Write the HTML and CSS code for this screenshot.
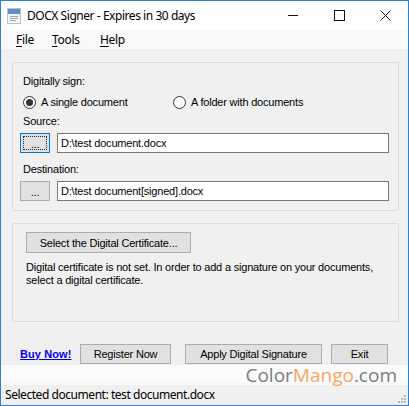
FILE: index.html
```html
<!DOCTYPE html>
<html>
<head>
<meta charset="utf-8">
<link rel="stylesheet" href="styles.css">
</head>
<body>
<div class="window">
  <div class="titlebar">
    <svg class="appicon" width="14" height="16" viewBox="0 0 14 16">
      <rect x="0.5" y="0.5" width="13" height="15" fill="#f4f6f8" stroke="#b9c2cc"/>
      <rect x="1" y="1" width="12" height="5" fill="#5b8fc9"/>
      <rect x="3" y="8" width="8" height="1" fill="#9aa6b2"/>
      <rect x="3" y="10" width="8" height="1" fill="#9aa6b2"/>
      <rect x="3" y="12" width="6" height="1" fill="#9aa6b2"/>
    </svg>
    <span class="title">DOCX Signer - Expires in 30 days</span>
    <div class="caption">
      <span class="cbtn"><svg width="11" height="11" viewBox="0 0 11 11"><path d="M0 5.5H10" stroke="#111" stroke-width="1"/></svg></span>
      <span class="cbtn"><svg width="11" height="11" viewBox="0 0 11 11"><rect x="0.5" y="0.5" width="10" height="10" fill="none" stroke="#111"/></svg></span>
      <span class="cbtn"><svg width="11" height="11" viewBox="0 0 11 11"><path d="M0.5 0.5L10.5 10.5M10.5 0.5L0.5 10.5" stroke="#111" stroke-width="1"/></svg></span>
    </div>
  </div>
  <div class="menubar">
    <span class="menu m-file"><u>F</u>ile</span>
    <span class="menu m-tools"><u>T</u>ools</span>
    <span class="menu m-help"><u>H</u>elp</span>
  </div>
  <div class="client">
    <div class="group g1">
      <div class="lbl first">Digitally sign:</div>
      <div class="radios">
        <span class="radio r1"><span class="dot on"></span>A single document</span>
        <span class="radio r2"><span class="dot"></span>A folder with documents</span>
      </div>
      <div class="lbl src">Source:</div>
      <div class="pathrow">
        <button class="btn browse focus"><span class="focusrect">...</span></button>
        <div class="field">D:\test document.docx</div>
      </div>
      <div class="lbl dst">Destination:</div>
      <div class="pathrow">
        <button class="btn browse"><span class="plain">...</span></button>
        <div class="field">D:\test document[signed].docx</div>
      </div>
    </div>
    <div class="group g2">
      <button class="btn cert">Select the Digital Certificate...</button>
      <p class="info">Digital certificate is not set. In order to add a signature on your documents, select a digital certificate.</p>
    </div>
    <div class="actions">
      <a class="buy">Buy Now!</a>
      <button class="btn reg">Register Now</button>
      <button class="btn apply">Apply Digital Signature</button>
      <button class="btn exit">Exit</button>
    </div>
  </div>
  <div class="statusbar">
    <span class="status">Selected document: test document.docx</span>
    <svg class="grip" width="10" height="10" viewBox="0 0 10 10">
      <rect x="8" y="2" width="2" height="2" fill="#b8b8b8"/>
      <rect x="5" y="5" width="2" height="2" fill="#b8b8b8"/>
      <rect x="8" y="5" width="2" height="2" fill="#b8b8b8"/>
      <rect x="2" y="8" width="2" height="2" fill="#b8b8b8"/>
      <rect x="5" y="8" width="2" height="2" fill="#b8b8b8"/>
      <rect x="8" y="8" width="2" height="2" fill="#b8b8b8"/>
    </svg>
  </div>
  <div class="watermark"><span class="wm-gray">Color</span><span class="wm-orange">Mango</span><span class="wm-gray">.com</span></div>
</div>
</body>
</html>
```

FILE: styles.css
```css
* { box-sizing: border-box; }
html, body { margin: 0; padding: 0; }
body {
  width: 409px;
  height: 406px;
  overflow: hidden;
  background: #f0f0f0;
  font-family: "Liberation Sans", Arial, sans-serif;
  font-size: 11px;
  letter-spacing: -0.2px;
  color: #000;
}
.window {
  position: relative;
  width: 409px;
  height: 406px;
  border: 1px solid #2f7ed0;
  background: #f0f0f0;
  display: flex;
  flex-direction: column;
}
.titlebar {
  height: 29px;
  background: #fff;
  display: flex;
  align-items: center;
  padding-left: 6px;
}
.appicon { margin-top: 1px; }
.title {
  margin-left: 6px;
  font-family: "Noto Sans", sans-serif;
  font-size: 12px;
  letter-spacing: -0.45px;
  color: #000;
}
.caption {
  margin-left: auto;
  display: flex;
}
.cbtn {
  width: 46px;
  height: 29px;
  display: flex;
  align-items: center;
  justify-content: center;
}
.menubar {
  height: 20px;
  background: #f9f9f9;
  display: flex;
  align-items: center;
  padding-left: 15px;
  border-bottom: 1px solid #f0f0f0;
}
.menu {
  font-family: "Noto Sans", sans-serif;
  font-size: 12px;
  letter-spacing: -0.3px;
}
.m-file { width: 36px; }
.m-tools { width: 48px; }
.menu u { text-decoration-thickness: 1px; text-underline-offset: 2px; }
.client {
  flex: 1;
  padding: 12px 9px 0 11px;
  display: flex;
  flex-direction: column;
}
.group {
  border: 1px solid #dcdcdc;
  border-radius: 2px;
}
.g1 {
  height: 149px;
  padding: 12px 9px 0 7px;
}
.lbl {
  height: 13px;
  line-height: 13px;
  margin-left: 3px;
}
.radios {
  display: flex;
  height: 13px;
  margin-top: 8px;
  margin-left: 3px;
  line-height: 13px;
}
.radio {
  display: flex;
  align-items: center;
  gap: 5px;
}
.r1 { width: 150px; }
.r2 { gap: 5px; }
.dot {
  width: 13px;
  height: 13px;
  border: 1px solid #333;
  border-radius: 50%;
  background: #fff;
  position: relative;
  flex: none;
}
.dot.on::after {
  content: "";
  position: absolute;
  left: 2px; top: 2px;
  width: 7px; height: 7px;
  border-radius: 50%;
  background: #333;
}
.src { margin-top: 6px; }
.dst { margin-top: 10px; }
.pathrow {
  display: flex;
  gap: 7px;
  margin-top: 5px;
  height: 20px;
}
.btn {
  font-family: "Liberation Sans", Arial, sans-serif;
  font-size: 11px;
  letter-spacing: -0.2px;
  color: #000;
  background: #e1e1e1;
  border: 1px solid #adadad;
  padding: 0;
  margin: 0;
  height: 20px;
  display: flex;
  align-items: center;
  justify-content: center;
}
.browse { width: 30px; flex: none; }
.browse.focus { border: 1px solid #0078d7; padding: 2px; }
.focusrect {
  width: 100%;
  height: 100%;
  border: 1px dotted #222;
  display: flex;
  align-items: center;
  justify-content: center;
  line-height: 1;
  padding-top: 2px;
}
.plain { padding-top: 2px; }
.field {
  flex: 1;
  background: #fff;
  border: 1px solid #7a7a7a;
  height: 20px;
  line-height: 18px;
  padding-left: 3px;
}
.g2 {
  margin-top: 12px;
  height: 99px;
  padding: 8px 10px 0 13px;
}
.cert { width: 165px; height: 21px; }
.info {
  margin: 8px 0 0 0;
  line-height: 13px;
}
.actions {
  display: flex;
  align-items: center;
  margin-top: 21px;
  height: 21px;
  padding-left: 8px;
}
.buy {
  color: #0000ee;
  font-weight: bold;
  text-decoration: underline;
  font-size: 11px;
  letter-spacing: 0.1px;
  width: 60px;
}
.reg { width: 91px; }
.apply { width: 137px; margin-left: 14px; }
.exit { width: 57px; margin-left: 9px; }
.statusbar {
  height: 22px;
  border-top: 1px solid #dadada;
  display: flex;
  align-items: center;
  padding-left: 4px;
  position: relative;
}
.status {
  font-family: "Noto Sans", sans-serif;
  font-size: 12px;
  letter-spacing: -0.45px;
}
.grip { position: absolute; right: 2px; bottom: 2px; }
.watermark {
  position: absolute;
  left: 0;
  right: 0;
  top: 364px;
  height: 20px;
  background: rgba(255,255,255,0.75);
  text-align: right;
  padding-right: 11px;
  font-family: "Open Sans", sans-serif;
  font-size: 19px;
  letter-spacing: 0;
  line-height: 21px;
  overflow: visible;
}
.wm-gray { color: #7b7b7b; }
.wm-orange { color: #f8a55e; }
```
